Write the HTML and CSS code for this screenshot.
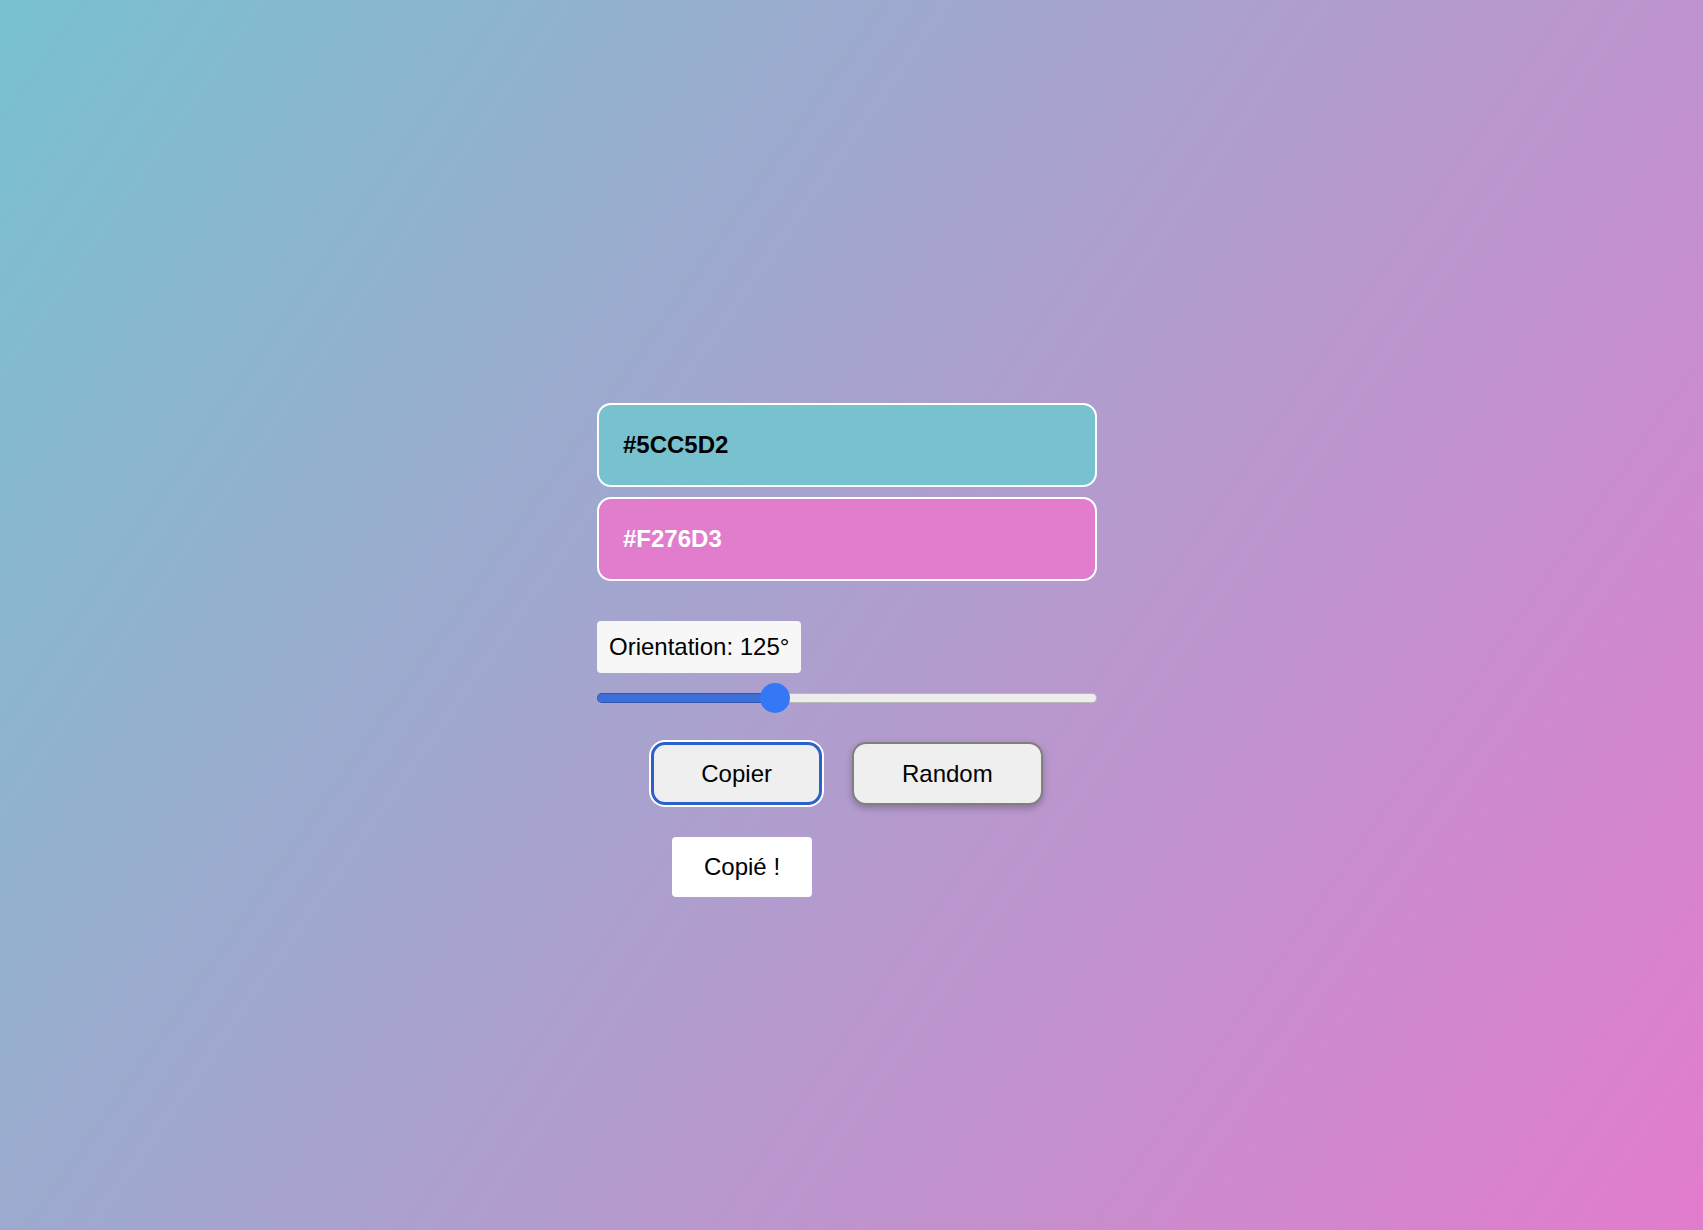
FILE: index.html
```html
<!DOCTYPE html>
<html lang="fr">
<head>
<meta charset="utf-8">
<title>Gradient</title>
<link rel="stylesheet" href="styles.css">
</head>
<body>
<main class="panel">
  <div class="swatch swatch-a">#5CC5D2</div>
  <div class="swatch swatch-b">#F276D3</div>
  <div class="label">Orientation: 125°</div>
  <input class="range" type="range" min="0" max="360" value="125">
  <div class="actions">
    <button class="btn btn-focus">Copier</button>
    <button class="btn btn-shadow">Random</button>
  </div>
  <div class="toast">Copié !</div>
</main>
</body>
</html>
```

FILE: styles.css
```css
html, body {
  margin: 0;
  height: 100%;
}
body {
  background: linear-gradient(125deg, #78c2cf 0%, #e27ccd 100%);
  font-family: "Liberation Sans", Arial, sans-serif;
  display: flex;
  justify-content: center;
  align-items: flex-start;
}
.panel {
  width: 500px;
  margin-right: 9px;
  margin-top: 403px;
  display: flex;
  flex-direction: column;
  align-items: stretch;
}
.swatch {
  box-sizing: border-box;
  height: 84px;
  border: 2px solid #ffffff;
  border-radius: 14px;
  padding: 26px 24px;
  font-size: 24px;
  line-height: 28px;
  font-weight: bold;
}
.swatch-a {
  background: #78c2cf;
  color: #000;
}
.swatch-b {
  background: #e27ccd;
  color: #fff;
  margin-top: 10px;
}
.label {
  align-self: flex-start;
  margin-top: 40px;
  background: #f7f7f7;
  border-radius: 4px;
  padding: 12px 12px;
  font-size: 24px;
  line-height: 28px;
  color: #000;
}
.range {
  -webkit-appearance: none;
  appearance: none;
  width: 500px;
  height: 10px;
  margin: 20px 0 10px 0;
  padding: 0;
  background: transparent;
}
.range::-webkit-slider-runnable-track {
  height: 10px;
  border-radius: 5px;
  background: linear-gradient(to right, #3d6fdb 35.6%, #ededed 35.6%);
  box-shadow: inset 0 0 0 1px rgba(0, 0, 0, 0.22);
}
.range::-webkit-slider-thumb {
  -webkit-appearance: none;
  appearance: none;
  width: 30px;
  height: 30px;
  border-radius: 50%;
  background: #3478f6;
  border: none;
  margin-top: -10px;
}
.actions {
  margin-top: 29px;
  display: flex;
  justify-content: center;
  gap: 30px;
}
.btn {
  box-sizing: border-box;
  height: 63px;
  padding: 0 48px;
  border: 2px solid #808080;
  border-radius: 14px;
  background: #efefef;
  font-family: "Liberation Sans", Arial, sans-serif;
  font-size: 24px;
  line-height: 28px;
  color: #000;
}
.btn-focus {
  border: 3px solid #2c60cc;
  padding: 0 47px;
  box-shadow: 0 0 0 2px #ffffff;
}
.btn-shadow {
  box-shadow: 0 3px 7px rgba(0, 0, 0, 0.25);
}
.toast {
  align-self: flex-start;
  margin-left: 75px;
  margin-top: 32px;
  background: #ffffff;
  border-radius: 4px;
  padding: 16px 32px;
  font-size: 24px;
  line-height: 28px;
  color: #000;
}
```
